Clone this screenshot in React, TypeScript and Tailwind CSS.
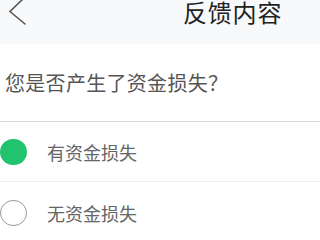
import { useState } from 'react';

const options = [
  { value: 'yes', label: '有资金损失' },
  { value: 'no', label: '无资金损失' },
];

export default function App() {
  const [selected, setSelected] = useState('yes');

  return (
    <div
      className="h-[240px] w-[320px] overflow-hidden bg-white"
      style={{ fontFamily: '"Noto Sans CJK SC", "Noto Sans", sans-serif' }}
    >
      {/* Header */}
      <div className="flex h-[44px] items-start bg-[#f8f9fb]">
        <button className="ml-[8px] mt-[-1px] h-[27px] w-[20px]">
          <svg viewBox="0 0 20 27" className="h-[27px] w-[20px]" fill="none" stroke="#555" strokeWidth={1.6} strokeLinecap="round">
            <path d="M14 1 L2 12.5 L17 25" />
          </svg>
        </button>
        <h1 className="ml-[155px] text-[24px] leading-[24px] tracking-[0.8px] text-[#222]">反馈内容</h1>
      </div>

      {/* Question */}
      <div className="flex h-[78px] items-center border-b border-[#d9d9d9] pl-[5px]">
        <p className="text-[20px] leading-[28px] tracking-[0.3px] text-[#555]">您是否产生了资金损失？</p>
      </div>

      {/* Options */}
      {options.map((o, i) => (
        <button
          key={o.value}
          onClick={() => setSelected(o.value)}
          className={`flex w-full items-center ${i === 0 ? 'h-[60px] border-b border-[#f0f0f0]' : 'h-[62px]'}`}
        >
          {selected === o.value ? (
            <span className="h-[26px] w-[27px] rounded-full bg-[#22c36d]" />
          ) : (
            <span className="h-[26px] w-[27px] rounded-full border-[1.5px] border-[#9a9a9a]" />
          )}
          <span className="ml-[20px] text-[18px] leading-[26px] text-[#666]">{o.label}</span>
        </button>
      ))}
    </div>
  );
}
